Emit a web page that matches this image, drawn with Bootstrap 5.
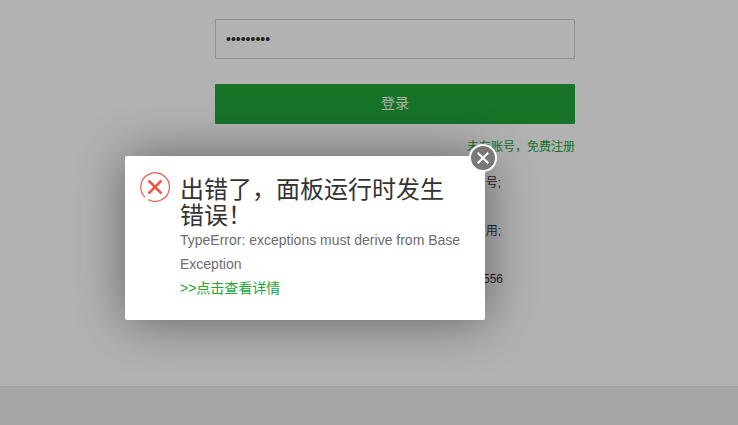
<!DOCTYPE html>
<html lang="zh">
<head>
<meta charset="utf-8">
<title>登录</title>
<link href="https://cdn.jsdelivr.net/npm/bootstrap@5.3.0/dist/css/bootstrap.min.css" rel="stylesheet">
<style>
html, body { height: 100%; overflow: hidden; }
body { font-family: "Liberation Sans", "Noto Sans CJK SC", sans-serif; font-size: 12px; color: #333; background: #fff; }
.page-wrap { height: 425px; }
.page-main { height: 386px; padding-top: 19px; }
.page-foot { height: 39px; background: #f0f0f0; border-top: 1px solid #eaeaea; }
.form-col { width: 360px; margin-left: 215px; }
.pw-input { height: 40px; border: 1px solid #ccc; border-radius: 1px; padding: 0 10px; font-size: 14px; color: #333; background: #fff; }
.login-btn { height: 40px; margin-top: 25px; padding: 0 0 2px; background: #20a53a; border: 0; border-radius: 1px; color: #fff; font-size: 14px; }
.reg-line { margin-top: 14px; line-height: 18px; color: #20a53a; }
.tip-list { width: 288px; margin-top: 18px; line-height: 18px; font-size: 12px; color: #333; }
.tip-list > div { height: 48px; }
.tip-inset { padding-right: 2px; }
.veil { position: absolute; inset: 0; background: rgba(0,0,0,.3); }
.err-box { position: absolute; left: 125px; top: 156px; width: 360px; height: 164px; background: #fff; border-radius: 2px; box-shadow: 1px 1px 50px rgba(0,0,0,.45); padding: 16px 20px 16px 15px; }
.err-icon { width: 30px; height: 30px; flex: 0 0 30px; margin-right: 10px; }
.err-title { font-size: 24px; line-height: 26px; color: #333; margin: 5px 0 -1px; font-weight: 400; }
.err-msg { font-size: 14px; line-height: 24px; color: #6c6c6c; margin: 0; }
.err-link { font-size: 14px; line-height: 24px; color: #20a53a; text-decoration: none; display: block; }
.err-close { position: absolute; right: -12px; top: -12px; width: 28px; height: 28px; padding: 0; border-radius: 50%; border: 2px solid #fff; background: #787878; display: flex; align-items: center; justify-content: center; }
</style>
</head>
<body>
<div class="page-wrap d-flex flex-column">
  <main class="page-main">
    <div class="form-col">
      <input class="form-control pw-input shadow-none" type="password" value="aaaaaaaaa" aria-label="密码">
      <button class="btn login-btn w-100 d-block" type="button">登录</button>
      <div class="reg-line text-end">未有账号，免费注册</div>
      <div class="tip-list text-end">
        <div class="tip-inset">请使用面板账号;</div>
        <div class="tip-inset">确保浏览器可用;</div>
        <div>客服 400-556</div>
      </div>
    </div>
  </main>
  <footer class="page-foot"></footer>
</div>
<div class="veil"></div>
<div class="err-box">
  <div class="d-flex">
    <svg class="err-icon" viewBox="0 0 30 30" aria-hidden="true">
      <path d="M4.9 25.1 A14.3 14.3 0 1 1 8 27.5" fill="none" stroke="#e9594c" stroke-width="1.2"/>
      <path d="M8.5 8.5 L21.5 21.5 M21.5 8.5 L8.5 21.5" fill="none" stroke="#e9594c" stroke-width="2.6"/>
    </svg>
    <div class="flex-grow-1">
      <h1 class="err-title">出错了，面板运行时发生错误！</h1>
      <p class="err-msg">TypeError: exceptions must derive from Base Exception</p>
      <a class="err-link" href="#">&gt;&gt;点击查看详情</a>
    </div>
  </div>
  <button class="err-close" type="button" aria-label="关闭">
    <svg width="12" height="12" viewBox="0 0 12 12" aria-hidden="true"><path d="M.7 .7 L11.3 11.3 M11.3 .7 L.7 11.3" stroke="#fff" stroke-width="2" fill="none"/></svg>
  </button>
</div>
<script src="https://cdn.jsdelivr.net/npm/bootstrap@5.3.0/dist/js/bootstrap.bundle.min.js"></script>
</body>
</html>
